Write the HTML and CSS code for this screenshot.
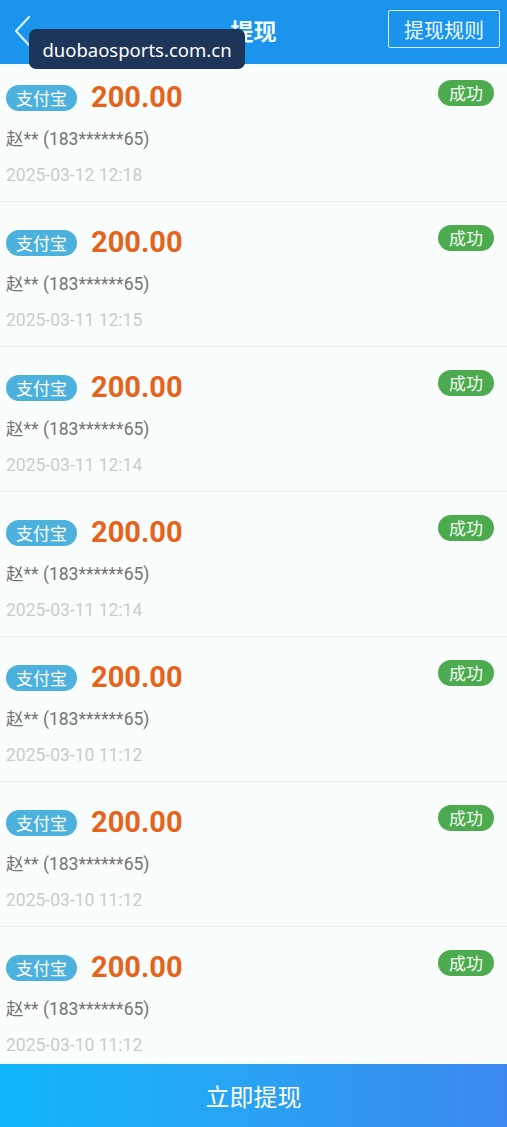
FILE: index.html
```html
<!DOCTYPE html>
<html lang="zh-CN">
<head>
<meta charset="utf-8">
<title>提现</title>
<link rel="stylesheet" href="styles.css">
</head>
<body>
<div class="page">
  <header class="topbar">
    <span class="back">
      <svg width="20" height="34" viewBox="0 0 20 34"><path d="M16 3 L3 17 L16 31" fill="none" stroke="#d8f4ff" stroke-width="2.2" stroke-linecap="round" stroke-linejoin="round"/></svg>
    </span>
    <h1 class="title">提现</h1>
    <span class="rules">提现规则</span>
    <div class="watermark">duobaosports.com.cn</div>
  </header>
  <main class="list">
    <div class="row first">
      <div class="line-top"><span class="pay">支付宝</span><span class="amount">200.00</span><span class="status">成功</span></div>
      <div class="name">赵** (183******65)</div>
      <div class="date">2025-03-12 12:18</div>
    </div>
    <div class="row">
      <div class="line-top"><span class="pay">支付宝</span><span class="amount">200.00</span><span class="status">成功</span></div>
      <div class="name">赵** (183******65)</div>
      <div class="date">2025-03-11 12:15</div>
    </div>
    <div class="row">
      <div class="line-top"><span class="pay">支付宝</span><span class="amount">200.00</span><span class="status">成功</span></div>
      <div class="name">赵** (183******65)</div>
      <div class="date">2025-03-11 12:14</div>
    </div>
    <div class="row">
      <div class="line-top"><span class="pay">支付宝</span><span class="amount">200.00</span><span class="status">成功</span></div>
      <div class="name">赵** (183******65)</div>
      <div class="date">2025-03-11 12:14</div>
    </div>
    <div class="row">
      <div class="line-top"><span class="pay">支付宝</span><span class="amount">200.00</span><span class="status">成功</span></div>
      <div class="name">赵** (183******65)</div>
      <div class="date">2025-03-10 11:12</div>
    </div>
    <div class="row">
      <div class="line-top"><span class="pay">支付宝</span><span class="amount">200.00</span><span class="status">成功</span></div>
      <div class="name">赵** (183******65)</div>
      <div class="date">2025-03-10 11:12</div>
    </div>
    <div class="row">
      <div class="line-top"><span class="pay">支付宝</span><span class="amount">200.00</span><span class="status">成功</span></div>
      <div class="name">赵** (183******65)</div>
      <div class="date">2025-03-10 11:12</div>
    </div>
  </main>
  <footer class="submit">立即提现</footer>
</div>
</body>
</html>
```
FILE: styles.css
```css
* { box-sizing: border-box; }
html, body { margin: 0; padding: 0; }
body {
  font-family: Roboto, "Noto Sans CJK SC", sans-serif;
  background: #f9fdfb;
}
.page {
  height: 100vh;
  display: flex;
  flex-direction: column;
  overflow: hidden;
}
.topbar {
  position: relative;
  height: 64px;
  flex: none;
  background: #1b94ee;
  display: flex;
  align-items: center;
  justify-content: center;
}
.back {
  position: absolute;
  left: 13px;
  top: 14px;
  display: flex;
}
.title {
  margin: 0;
  color: #f2fbff;
  font-size: 23px;
  font-weight: 700;
  font-family: "Noto Sans CJK SC", sans-serif;
  line-height: 1;
  margin-top: -4px;
}
.rules {
  position: absolute;
  right: 7px;
  top: 10px;
  width: 112px;
  height: 38px;
  border: 1.5px solid #d6f0ff;
  border-radius: 2px;
  color: #eef9ff;
  font-family: "Noto Sans CJK SC", sans-serif;
  font-size: 20px;
  display: flex;
  align-items: center;
  justify-content: center;
}
.watermark {
  position: absolute;
  left: 29px;
  top: 29px;
  width: 216px;
  height: 40px;
  background: #1d3559;
  border-radius: 7px;
  color: #ffffff;
  font-family: "Noto Sans", sans-serif;
  font-size: 18.5px;
  display: flex;
  align-items: center;
  justify-content: center;
  z-index: 2;
}
.list {
  flex: 1;
  overflow: hidden;
}
.row {
  height: 145px;
  padding: 25px 13px 0 6px;
  border-bottom: 1px solid #e9eeec;
  background: #f9fdfb;
}
.row.first {
  height: 138px;
  padding-top: 18px;
}
.line-top {
  height: 32px;
  display: flex;
  align-items: center;
}
.pay {
  height: 26px;
  padding: 0 10px;
  border-radius: 13px;
  background: #4cb1dc;
  color: #ffffff;
  font-family: "Noto Sans CJK SC", sans-serif;
  font-size: 17px;
  line-height: 26px;
}
.amount {
  margin-left: 14px;
  margin-top: -3px;
  color: #e5631b;
  font-size: 29px;
  font-weight: 700;
  line-height: 32px;
}
.status {
  margin-left: auto;
  align-self: flex-start;
  margin-top: -2px;
  width: 56px;
  height: 26px;
  border-radius: 13px;
  background: #4caa4f;
  color: #f4fff4;
  font-family: "Noto Sans CJK SC", sans-serif;
  font-size: 17px;
  line-height: 26px;
  text-align: center;
}
.name {
  margin-top: 13px;
  line-height: 24px;
  font-size: 17.5px;
  color: #747474;
}
.date {
  margin-top: 12px;
  line-height: 24px;
  font-size: 17.5px;
  color: #c9cccb;
}
.submit {
  flex: none;
  height: 63px;
  background: linear-gradient(90deg, #10b7fa 0%, #2aa2f4 50%, #3b88ee 100%);
  color: #ffffff;
  font-family: "Noto Sans CJK SC", sans-serif;
  font-size: 24px;
  display: flex;
  align-items: center;
  justify-content: center;
}
```
